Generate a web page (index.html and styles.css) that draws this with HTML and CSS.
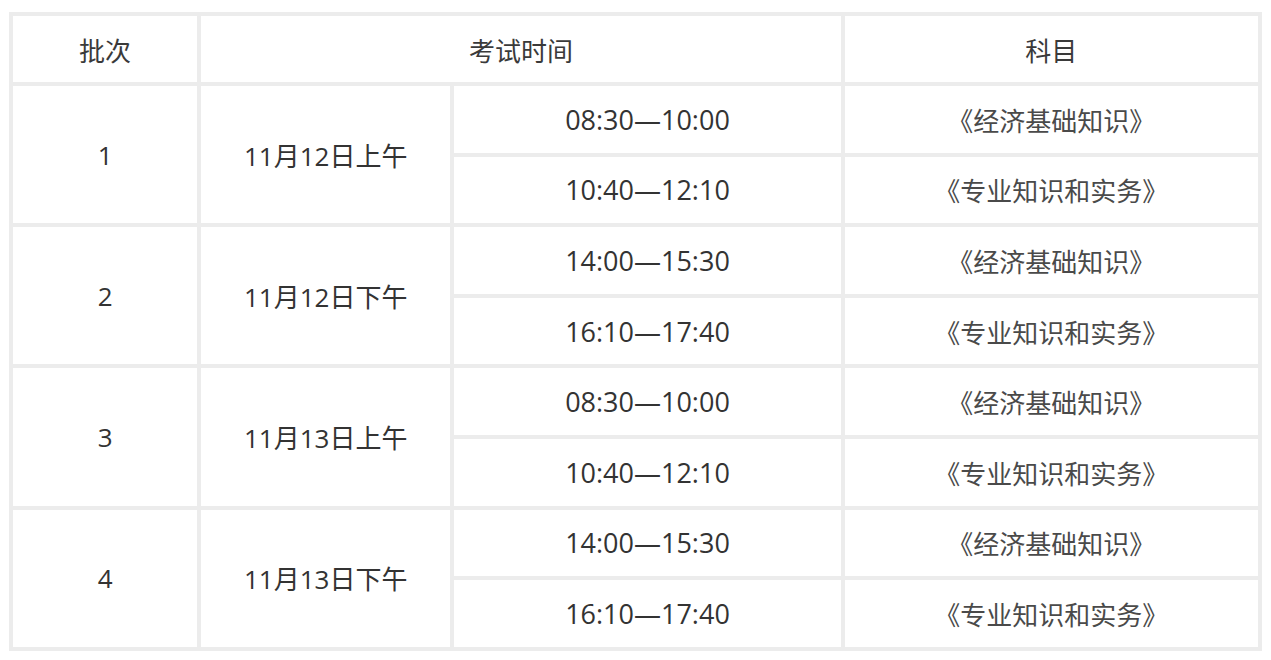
FILE: index.html
```html
<!DOCTYPE html>
<html lang="zh-CN">
<head>
<meta charset="utf-8">
<title>考试时间安排</title>
<link rel="stylesheet" href="styles.css">
</head>
<body>
<div class="page">
  <table class="schedule">
    <colgroup>
      <col class="c-batch">
      <col class="c-date">
      <col class="c-time">
      <col class="c-subject">
    </colgroup>
    <thead>
      <tr>
        <th>批次</th>
        <th colspan="2">考试时间</th>
        <th>科目</th>
      </tr>
    </thead>
    <tbody>
      <tr>
        <td rowspan="2" class="num">1</td>
        <td rowspan="2" class="date">11月12日上午</td>
        <td class="time">08:30—10:00</td>
        <td class="subject">《经济基础知识》</td>
      </tr>
      <tr>
        <td class="time">10:40—12:10</td>
        <td class="subject">《专业知识和实务》</td>
      </tr>
      <tr>
        <td rowspan="2" class="num">2</td>
        <td rowspan="2" class="date">11月12日下午</td>
        <td class="time">14:00—15:30</td>
        <td class="subject">《经济基础知识》</td>
      </tr>
      <tr>
        <td class="time">16:10—17:40</td>
        <td class="subject">《专业知识和实务》</td>
      </tr>
      <tr>
        <td rowspan="2" class="num">3</td>
        <td rowspan="2" class="date">11月13日上午</td>
        <td class="time">08:30—10:00</td>
        <td class="subject">《经济基础知识》</td>
      </tr>
      <tr>
        <td class="time">10:40—12:10</td>
        <td class="subject">《专业知识和实务》</td>
      </tr>
      <tr>
        <td rowspan="2" class="num">4</td>
        <td rowspan="2" class="date">11月13日下午</td>
        <td class="time">14:00—15:30</td>
        <td class="subject">《经济基础知识》</td>
      </tr>
      <tr>
        <td class="time">16:10—17:40</td>
        <td class="subject">《专业知识和实务》</td>
      </tr>
    </tbody>
  </table>
</div>
</body>
</html>
```

FILE: styles.css
```css
html, body {
  margin: 0;
  padding: 0;
  background: #ffffff;
}

.page {
  padding: 12px 9px;
}

.schedule {
  border-collapse: separate;
  border-spacing: 4px;
  background: #ececec;
  table-layout: fixed;
  width: 1253px;
  font-family: "Open Sans", "Noto Sans CJK SC", sans-serif;
  font-size: 26px;
  color: #333333;
}

.c-batch { width: 184px; }
.c-date { width: 249px; }
.c-time { width: 386px; }
.c-subject { width: 413px; }

.schedule th,
.schedule td {
  background: #ffffff;
  text-align: center;
  vertical-align: middle;
  padding: 0;
  font-weight: 400;
}

.schedule th {
  height: 66px;
  font-size: 26px;
  font-family: "Noto Sans CJK SC", sans-serif;
  color: #3a3a3a;
}

.schedule td {
  height: 66.6px;
}

.num {
  font-size: 26px;
}

.date {
  font-size: 26px;
}

.time {
  font-size: 27px;
}

.subject {
  font-family: "Noto Sans CJK SC", sans-serif;
  font-weight: 300;
  font-size: 26px;
  color: #4a4a4a;
}
```
